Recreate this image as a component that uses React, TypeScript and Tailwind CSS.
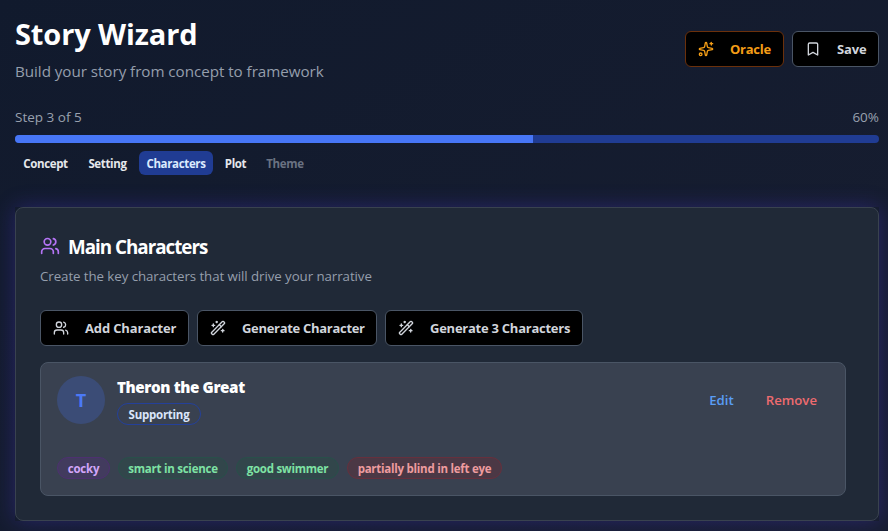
import React from "react";
import { Bookmark, Sparkles, Users, WandSparkles } from "lucide-react";

const outline =
  "flex h-9 items-center rounded-md border bg-black pl-3 text-[13px] font-bold whitespace-nowrap";

function OutlineButton({ icon, label, className }: { icon: React.ReactNode; label: string; className: string }) {
  return (
    <button className={`${outline} ${className}`}>
      {icon}
      <span className="ml-4 pt-0.5">{label}</span>
    </button>
  );
}

function Badge({ label, className }: { label: string; className: string }) {
  return (
    <span className={`flex h-[22px] items-center justify-center rounded-full border pt-px text-[11.5px] font-bold tracking-[-0.25px] whitespace-nowrap ${className}`}>
      {label}
    </span>
  );
}

const steps = [
  { label: "Concept", className: "w-[61px] text-gray-200" },
  { label: "Setting", className: "w-[55px] text-gray-200" },
  { label: "Characters", className: "w-[74px] bg-[#203c93] text-blue-100" },
  { label: "Plot", className: "w-[37px] text-gray-200" },
  { label: "Theme", className: "w-[54px] text-gray-500" },
];

const traits = [
  { label: "cocky", className: "w-[53px] border-[#4d3070] bg-[#423b5e] text-[#d3a6fa]" },
  { label: "smart in science", className: "w-[110px] border-[#28504a] bg-[#32464b] text-[#7ee2a4]" },
  { label: "good swimmer", className: "w-[103px] border-[#28504a] bg-[#32464b] text-[#7ee2a4]" },
  { label: "partially blind in left eye", className: "w-[155px] border-[#66303d] bg-[#4b3845] text-[#ee9c9f]" },
];

export default function App() {
  return (
    <div className="h-[531px] w-[888px] overflow-hidden bg-gradient-to-br from-[#111a2d] to-[#181e31] pr-[9px] pl-[15px] font-['Open_Sans','Noto_Sans',sans-serif] text-white">
      <header className="flex justify-between">
        <div className="pt-4">
          <h1 className="text-[29px] leading-9 font-bold tracking-[-0.1px]">Story Wizard</h1>
          <p className="mt-[7px] text-[15.2px] leading-6 tracking-[-0.04px] whitespace-nowrap text-[#959eac]">Build your story from concept to framework</p>
        </div>
        <div className="mt-[31px] flex gap-2">
          <OutlineButton label="Oracle" className="w-[99px] border-[#6b300b] tracking-[-0.25px] text-[#f59e16]" icon={<Sparkles size={16} />} />
          <OutlineButton label="Save" className="w-[87px] border-gray-600 tracking-[-0.1px] text-gray-300" icon={<Bookmark size={16} />} />
        </div>
      </header>

      <section className="mt-6">
        <div className="flex justify-between text-[13.5px] leading-5 text-[#99a1af]">
          <span>Step 3 of 5</span>
          <span>60%</span>
        </div>
        <div className="mt-2 h-2 overflow-hidden rounded bg-[#203c93]">
          <div className="h-full w-[60%] bg-[#4776f6]" />
        </div>
        <nav className="mt-2 flex gap-1">
          {steps.map((s) => (
            <span key={s.label} className={`flex h-6 items-center justify-center rounded-md pt-px text-[11.5px] font-bold tracking-[-0.35px] whitespace-nowrap ${s.className}`}>
              {s.label}
            </span>
          ))}
        </nav>
      </section>

      <div className="mt-8 shadow-[0_0_20px_rgba(79,55,225,0.32)]">
        <section className="h-[314px] rounded-lg border border-[#39424f] bg-[#202937] px-6 pt-[27px]">
          <div className="flex h-6 items-center gap-2">
            <Users size={20} className="-mt-0.5 text-[#b574f5]" />
            <h2 className="text-[18.8px] leading-6 font-bold tracking-[-1px] whitespace-nowrap">Main Characters</h2>
          </div>
          <p className="mt-[7px] text-[13.3px] leading-5 tracking-[-0.07px] text-[#959eac]">Create the key characters that will drive your narrative</p>

          <div className="mt-6 flex gap-2">
            <OutlineButton label="Add Character" className="w-[149px] border-gray-600 tracking-[-0.15px] text-gray-300" icon={<Users size={16} />} />
            <OutlineButton label="Generate Character" className="w-[180px] border-gray-600 tracking-[-0.3px] text-gray-300" icon={<WandSparkles size={16} />} />
            <OutlineButton label="Generate 3 Characters" className="w-[198px] border-gray-600 tracking-[-0.25px] text-gray-300" icon={<WandSparkles size={16} />} />
          </div>

          <article className="mt-4 h-[134px] w-[806px] rounded-lg border border-gray-600 bg-[#394150] px-4 pt-[13px]">
            <div className="flex h-12 items-center">
              <div className="flex size-12 items-center justify-center rounded-full bg-[#3b4c76] text-lg font-bold text-[#4b79f7]">T</div>
              <div className="ml-3">
                <h3 className="text-[15.2px] leading-6 font-extrabold tracking-[-0.4px] whitespace-nowrap">Theron the Great</h3>
                <Badge label="Supporting" className="mt-1 w-[84px] border-[#24409a] text-[#dbe5fa]" />
              </div>
              <div className="mr-3 ml-auto flex gap-8 pt-0.5 text-[13.2px] font-semibold">
                <button className="text-[#5a9df5]">Edit</button>
                <button className="text-[#ee6b6f]">Remove</button>
              </div>
            </div>
            <div className="mt-[33px] flex gap-2">
              {traits.map((t) => (
                <Badge key={t.label} label={t.label} className={t.className} />
              ))}
            </div>
          </article>
        </section>
      </div>
    </div>
  );
}
